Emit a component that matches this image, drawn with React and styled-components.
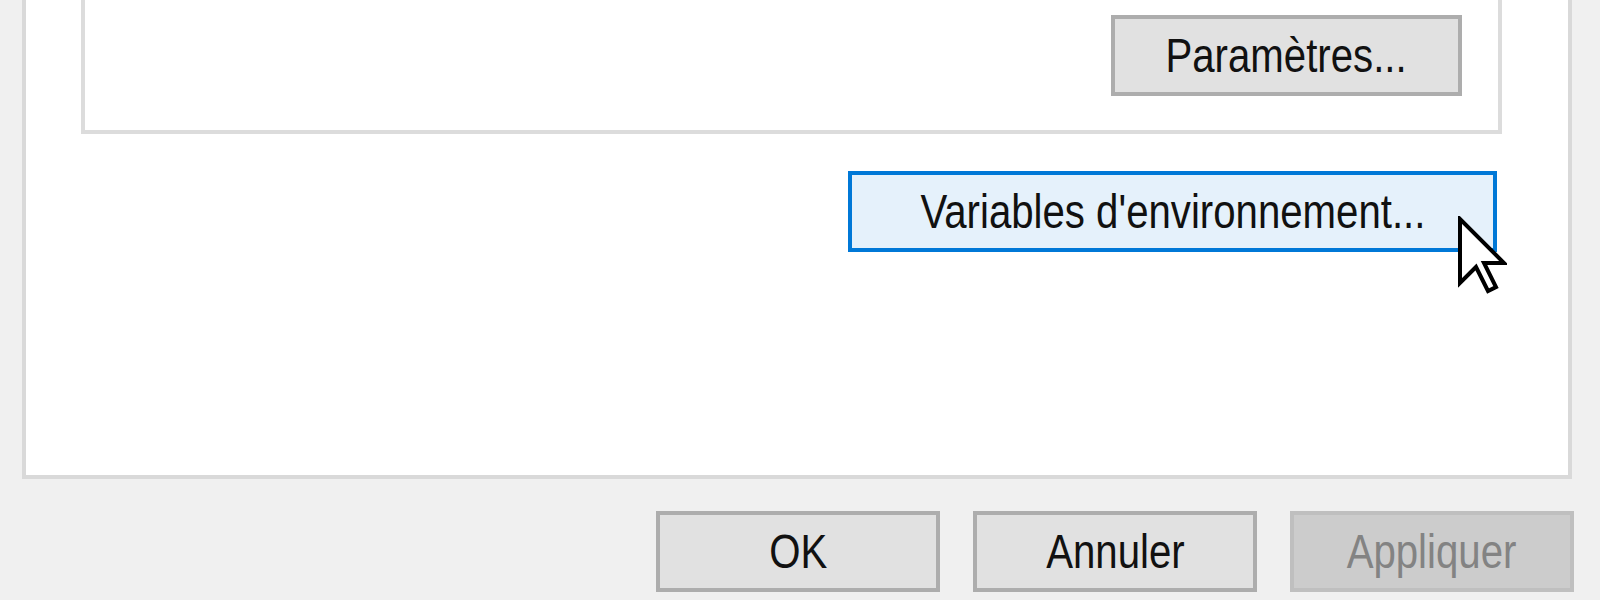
import React from "react";
import { styled, createGlobalStyle } from "styled-components";

const GlobalStyle = createGlobalStyle`
  html, body {
    margin: 0;
    padding: 0;
    background: #f0f0f0;
    overflow: hidden;
  }
  body {
    font-family: "Liberation Sans", Arial, sans-serif;
  }
`;

export default function App() {
  return (
    <Screen>
      <GlobalStyle />
      <TabPage>
        <GroupBox>
          <Button>
            <Label>Paramètres...</Label>
          </Button>
        </GroupBox>
        <EnvRow>
          <Button $focused>
            <Label>Variables d'environnement...</Label>
            <Pointer width="50" height="80" viewBox="-3 -3 50 80">
              <path
                d="M0 0 L0 64 L16 48 L28 72 L36 68 L24 44 L44 44 Z"
                fill="#fff"
                stroke="#000"
                strokeWidth="4"
                strokeLinejoin="miter"
              />
            </Pointer>
          </Button>
        </EnvRow>
      </TabPage>
      <Footer>
        <DialogButton>
          <Label>OK</Label>
        </DialogButton>
        <DialogButton>
          <Label>Annuler</Label>
        </DialogButton>
        <DialogButton disabled>
          <Label>Appliquer</Label>
        </DialogButton>
      </Footer>
    </Screen>
  );
}

const Screen = styled.div`
  width: 1600px;
  height: 600px;
  display: flex;
  flex-direction: column;
`;

const TabPage = styled.div`
  box-sizing: border-box;
  margin-left: 22px;
  width: 1550px;
  height: 479px;
  background: #fff;
  border: 4px solid #d9d9d9;
  border-top: none;
  display: flex;
  flex-direction: column;
`;

const GroupBox = styled.div`
  box-sizing: border-box;
  margin-left: 55px;
  width: 1421px;
  height: 134px;
  border: 4px solid #dcdcdc;
  border-top: none;
  padding: 15px 36px 0 0;
  display: flex;
  justify-content: flex-end;
  align-items: flex-start;
`;

// narrow, upscaled system font
const Label = styled.span`
  display: inline-block;
  white-space: nowrap;
  transform: scaleX(0.82);
  transform-origin: center;
`;

const Button = styled.button`
  position: relative;
  box-sizing: border-box;
  width: ${(p) => (p.$focused ? "649px" : "351px")};
  height: 81px;
  padding: 0;
  background: ${(p) => (p.$focused ? "#e5f1fb" : "#e1e1e1")};
  border: 4px solid ${(p) => (p.$focused ? "#0078d7" : "#adadad")};
  color: #111;
  font-family: "Liberation Sans", Arial, sans-serif;
  font-size: 49px;
  line-height: 1;
  text-align: center;
`;

const EnvRow = styled.div`
  margin-top: 37px;
  padding-right: 71px;
  display: flex;
  justify-content: flex-end;
`;

const Pointer = styled.svg`
  position: absolute;
  left: 605px;
  top: 41px;
`;

const Footer = styled.div`
  margin-top: 32px;
  padding-right: 26px;
  display: flex;
  justify-content: flex-end;
  gap: 33px;
`;

const DialogButton = styled.button`
  box-sizing: border-box;
  width: 284px;
  height: 81px;
  padding: 0;
  background: ${(p) => (p.disabled ? "#cccccc" : "#e1e1e1")};
  border: 4px solid ${(p) => (p.disabled ? "#bfbfbf" : "#adadad")};
  color: ${(p) => (p.disabled ? "#838383" : "#111")};
  font-family: "Liberation Sans", Arial, sans-serif;
  font-size: 49px;
  line-height: 1;
  text-align: center;
`;
